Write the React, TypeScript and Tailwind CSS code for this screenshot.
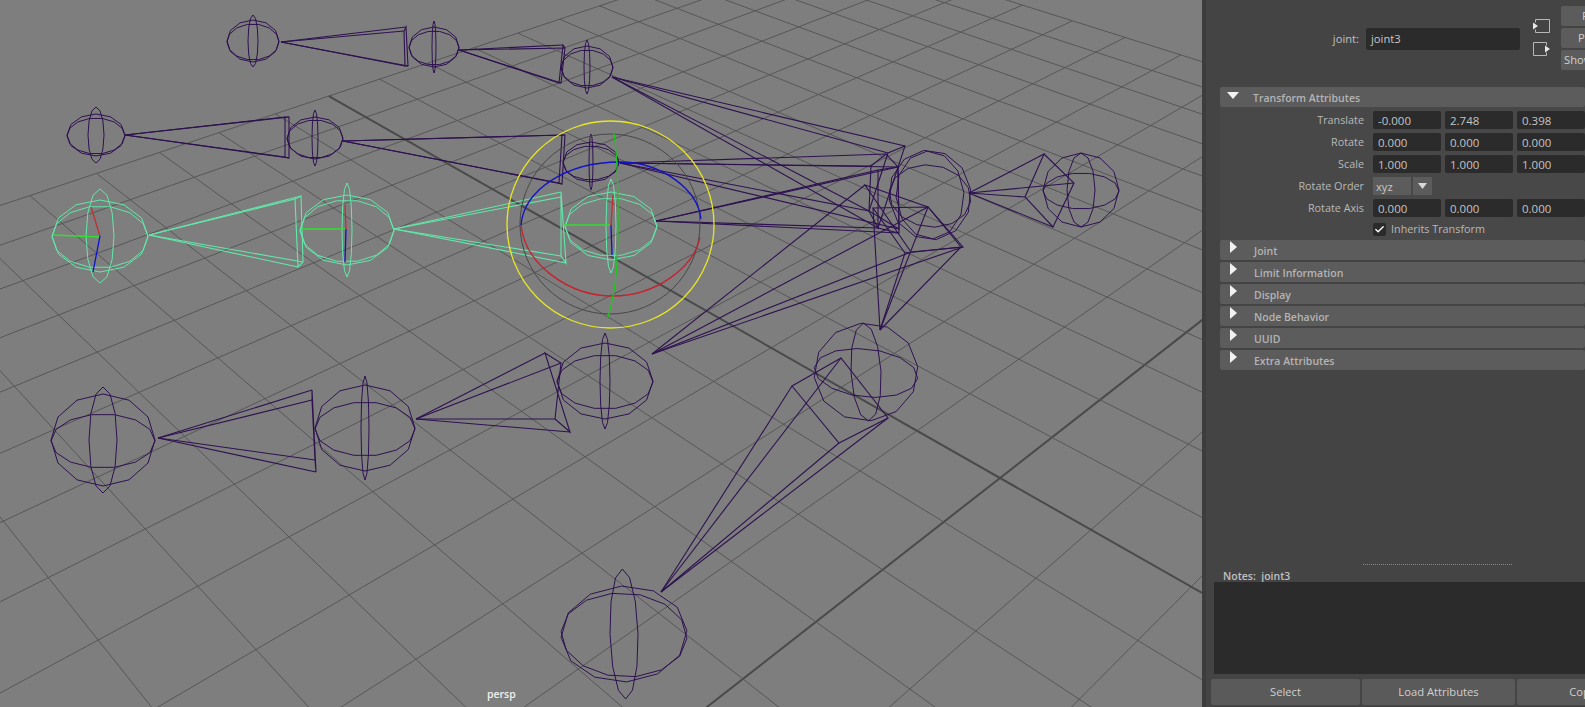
import { Check } from 'lucide-react';

type Pt = [number, number];

// perspective grid: maps grid cell (u, v) to the screen, origin at the axes crossing
const project = (u: number, v: number): Pt => {
  const w = 1 - 0.046 * u - 0.04 * v;
  return [1000 + (86.8 * u - 54 * v) / w, 478 + (49.4 * u + 42.2 * v) / w];
};

const steps = Array.from({ length: 25 }, (_, i) => i - 12);

function GridLine({ u, v }: { u?: number; v?: number }) {
  let a: Pt;
  let b: Pt;
  if (u !== undefined) {
    a = project(u, -12);
    b = project(u, Math.min(12, (0.95 - 0.046 * u) / 0.04));
  } else {
    a = project(-12, v as number);
    b = project(Math.min(12, (0.95 - 0.04 * (v as number)) / 0.046), v as number);
  }
  const axis = (u === 0 || v === 0);
  return (
    <line
      x1={a[0]}
      y1={a[1]}
      x2={b[0]}
      y2={b[1]}
      stroke={axis ? '#4a4a4a' : '#575757'}
      strokeWidth={axis ? 2 : 1}
    />
  );
}

const ring = (cx: number, cy: number, rx: number, ry: number, n = 16, tilt = 0) => {
  const t = (tilt * Math.PI) / 180;
  return Array.from({ length: n }, (_, i) => {
    const a = (i / n) * Math.PI * 2;
    const px = Math.cos(a) * rx;
    const py = Math.sin(a) * ry;
    return `${cx + px * Math.cos(t) - py * Math.sin(t)},${cy + px * Math.sin(t) + py * Math.cos(t)}`;
  }).join(' ');
};

type JointSpec = {
  x: number;
  y: number;
  rx: number;
  ry: number;
  hy: number;
  sx: number;
  sy: number;
  tilt?: number;
};

function Joint({ x, y, rx, ry, hy, sx, sy, tilt = 0, color }: JointSpec & { color: string }) {
  return (
    <g fill="none" stroke={color} strokeWidth={1}>
      <polygon points={ring(x, y, rx, ry, 12, tilt)} />
      <polygon points={ring(x, y + 1, rx, hy, 14, -tilt)} />
      <polygon points={ring(x, y, sx, sy, 12, tilt / 2)} />
    </g>
  );
}

function Bone({ tip, base, color }: { tip: Pt; base: Pt[]; color: string }) {
  return (
    <g fill="none" stroke={color} strokeWidth={1.1}>
      {base.map((p, i) => (
        <line key={i} x1={tip[0]} y1={tip[1]} x2={p[0]} y2={p[1]} />
      ))}
      <polygon points={base.map((p) => p.join(',')).join(' ')} />
    </g>
  );
}

const purple = '#2e1250';
const mint = '#62e8aa';

const joints: JointSpec[] = [
  { x: 253, y: 41, rx: 26, ry: 21, hy: 18, sx: 5, sy: 26 },
  { x: 434, y: 47, rx: 25, ry: 20, hy: 17, sx: 2, sy: 26 },
  { x: 587, y: 67, rx: 26, ry: 21, hy: 18, sx: 3, sy: 27 },
  { x: 96, y: 135, rx: 29, ry: 21, hy: 18, sx: 8, sy: 28 },
  { x: 315, y: 138, rx: 28, ry: 21, hy: 19, sx: 3, sy: 28 },
  { x: 591, y: 162, rx: 28, ry: 20, hy: 17, sx: 2, sy: 28 },
  { x: 103, y: 440, rx: 52, ry: 46, hy: 27, sx: 14, sy: 53 },
  { x: 365, y: 428, rx: 50, ry: 43, hy: 27, sx: 4, sy: 52 },
  { x: 605, y: 381, rx: 48, ry: 38, hy: 27, sx: 5, sy: 48 },
  { x: 930, y: 195, rx: 41, ry: 45, hy: 31, sx: 34, sy: 44, tilt: -8 },
  { x: 1081, y: 190, rx: 38, ry: 37, hy: 18, sx: 14, sy: 37 },
  { x: 866, y: 372, rx: 52, ry: 49, hy: 24, sx: 15, sy: 49, tilt: -6 },
  { x: 624, y: 634, rx: 63, ry: 48, hy: 42, sx: 14, sy: 65, tilt: -3 },
];

const bones: { tip: Pt; base: Pt[] }[] = [
  { tip: [281, 42], base: [[406, 27], [408, 66], [405, 66], [404, 31]] },
  { tip: [459, 50], base: [[563, 45], [559, 83], [561, 83], [565, 48]] },
  { tip: [612, 77], base: [[905, 146], [888, 153], [869, 211], [878, 228]] },
  { tip: [125, 135], base: [[289, 117], [289, 158], [285, 157], [285, 117]] },
  { tip: [343, 141], base: [[565, 135], [562, 184], [559, 183], [562, 135]] },
  { tip: [620, 163], base: [[886, 154], [871, 166], [869, 211], [899, 229], [898, 167]] },
  { tip: [158, 438], base: [[312, 390], [316, 472], [315, 460], [312, 400]] },
  { tip: [416, 419], base: [[545, 353], [570, 432], [555, 419], [561, 363]] },
  { tip: [656, 221], base: [[878, 170], [898, 167], [899, 233], [878, 228]] },
  { tip: [652, 354], base: [[865, 185], [928, 207], [963, 247], [911, 252]] },
  { tip: [880, 330], base: [[873, 208], [928, 207], [961, 247], [905, 253]] },
  { tip: [969, 193], base: [[1044, 154], [1074, 183], [1053, 227], [1025, 197]] },
  { tip: [661, 592], base: [[792, 386], [841, 358], [888, 418], [839, 443]] },
];

function Viewport() {
  return (
    <div className="relative h-full w-[1202px] shrink-0 overflow-hidden bg-[#7e7e7e]">
      <svg width="1202" height="707" viewBox="0 0 1202 707" className="block">
        {steps.map((n) => (
          <GridLine key={`u${n}`} u={n} />
        ))}
        {steps.map((n) => (
          <GridLine key={`v${n}`} v={n} />
        ))}

        {joints.map((j, i) => (
          <Joint key={i} {...j} color={purple} />
        ))}
        {bones.map((b, i) => (
          <Bone key={i} tip={b.tip} base={b.base} color={purple} />
        ))}

        {/* selected chain */}
        <Joint x={100} y={236} rx={48} ry={36} hy={31} sx={14} sy={47} color={mint} />
        <Joint x={347} y={230} rx={47} ry={35} hy={31} sx={5} sy={47} color={mint} />
        <Joint x={611} y={226} rx={46} ry={34} hy={29} sx={5} sy={47} color={mint} />
        <Bone tip={[149, 235]} base={[[301, 196], [303, 262], [298, 267], [295, 199]]} color={mint} />
        <Bone tip={[394, 229]} base={[[561, 192], [566, 263], [561, 256], [561, 197]]} color={mint} />

        {/* joint axes */}
        <g fill="none" strokeWidth={1.3}>
          <path d="M53 235L100 237M302 229L346 229M564 225L610 225" stroke="#30e030" />
          <path d="M91 207L100 236M345 205L346 229M613 195L611 225" stroke="#c03030" />
          <path d="M100 236L93 272M346 229L345 262M611 225L612 255" stroke="#1010d0" />
        </g>

        {/* rotate manipulator */}
        <g fill="none">
          <circle cx={610} cy={224} r={90} stroke="#484848" strokeWidth={1} />
          <path d="M521 225C524 190 566 162 620 162C662 162 698 190 701 219" stroke="#1212c8" strokeWidth={1.3} />
          <path d="M521 225C525 264 568 296 613 296C655 296 694 268 700 237" stroke="#c8202c" strokeWidth={1.3} />
          <path d="M614 133C618 160 618 190 618 215C618 250 617 280 613 295C612 303 610 311 608 317" stroke="#1cc81c" strokeWidth={1.3} />
          <circle cx={610.5} cy={224.5} r={103.5} stroke="#e6e628" strokeWidth={1.3} />
        </g>
      </svg>
      <span className="absolute left-[487px] top-[687px] text-[10.5px] font-semibold leading-[14px] text-[#f0f0f0]">
        persp
      </span>
    </div>
  );
}

const fieldClass =
  'flex h-[18px] w-[68px] shrink-0 items-center rounded-[2px] bg-[#2b2b2b] pl-[5px] pt-[1px] text-[11.5px] text-[#c4c4c4]';

function AttrRow({ label, values }: { label: string; values: string[] }) {
  return (
    <div className="mb-[4px] flex h-[18px] items-center">
      <span className="mr-[9px] w-[144px] shrink-0 text-right text-[10.8px] text-[#b8b8b8]">{label}</span>
      <div className="flex gap-[4px]">
        {values.map((v, i) => (
          <div key={i} className={fieldClass}>
            {v}
          </div>
        ))}
      </div>
    </div>
  );
}

function Section({ title, open }: { title: string; open?: boolean }) {
  return (
    <div className="mb-[2px] flex h-[20px] items-center rounded-[2px] bg-[#5c5c5c]">
      {open ? (
        <svg width="12" height="7" viewBox="0 0 12 7" className="ml-[7px] mb-[3px] shrink-0">
          <path d="M0 0H12L6 7Z" fill="#f2f2f2" />
        </svg>
      ) : (
        <svg width="7" height="12" viewBox="0 0 7 12" className="ml-[10px] mb-[6px] mr-[3px] shrink-0">
          <path d="M0 0L7 6L0 12Z" fill="#f2f2f2" />
        </svg>
      )}
      <span className="ml-[14px] pt-[2px] text-[10.5px] font-semibold text-[#b4b4b4]">{title}</span>
    </div>
  );
}

function SideIcon({ flip }: { flip?: boolean }) {
  return (
    <svg width="18" height="14" viewBox="0 0 18 14" className="shrink-0">
      {flip ? (
        <>
          <path d="M13.5 3.5V0.5H0.5V13.5H13.5V10.5" fill="none" stroke="#b8b8b8" />
          <path d="M12 3.5L17 7L12 10.5Z" fill="#e8e8e8" />
        </>
      ) : (
        <>
          <path d="M2.5 3.5V0.5H16.5V13.5H2.5V10.5" fill="none" stroke="#b8b8b8" />
          <path d="M0 3.5L5 7L0 10.5Z" fill="#e8e8e8" />
        </>
      )}
    </svg>
  );
}

function AttributePanel() {
  return (
    <div className="flex h-full w-[383px] shrink-0 flex-col overflow-hidden border-l-[4px] border-[#3d3d3d] bg-[#444444] text-[11.2px] leading-none">
      <div className="h-[87px] shrink-0 pl-[14px]">
        <div className="flex items-start pt-[6px]">
          <div className="mt-[21px] flex h-[22px] items-center pt-[1px]">
            <span className="w-[139px] text-right text-[#c0c0c0]">joint:</span>
            <div className="ml-[7px] flex h-[22px] w-[154px] items-center rounded-[2px] bg-[#2b2b2b] pl-[5px] text-[#c8c8c8]">
              joint3
            </div>
          </div>
          <div className="ml-[13px] mt-[13px] flex flex-col gap-[9px]">
            <SideIcon />
            <SideIcon flip />
          </div>
          <div className="ml-[10px] flex w-[90px] shrink-0 flex-col gap-[2px] text-[#d0d0d0]">
            <div className="flex h-[20px] items-center rounded-[2px] bg-[#5c5c5c] pl-[21px]">Focus</div>
            <div className="flex h-[20px] items-center rounded-[2px] bg-[#5c5c5c] pl-[17px]">Presets</div>
            <div className="flex h-[20px] items-center rounded-[2px] bg-[#5c5c5c] pl-[3px]">Show</div>
          </div>
        </div>
      </div>

      <div className="w-[379px] shrink-0 pl-[14px]">
        <Section title="Transform Attributes" open />
        <div className="-mt-[2px] h-[133px] bg-[#484848] pt-[4px]">
          <AttrRow label="Translate" values={['-0.000', '2.748', '0.398']} />
          <AttrRow label="Rotate" values={['0.000', '0.000', '0.000']} />
          <AttrRow label="Scale" values={['1.000', '1.000', '1.000']} />
          <div className="mb-[4px] flex h-[18px] items-center">
            <span className="mr-[9px] w-[144px] shrink-0 text-right text-[10.8px] text-[#b8b8b8]">Rotate Order</span>
            <div className="flex h-[18px] w-[38px] items-center bg-[#5c5c5c] pl-[3px] pt-[2px] text-[#c8c8c8]">xyz</div>
            <div className="ml-[2px] flex h-[18px] w-[19px] items-center justify-center bg-[#5c5c5c]">
              <svg width="9" height="6" viewBox="0 0 9 6">
                <path d="M0 0H9L4.5 6Z" fill="#d8d8d8" />
              </svg>
            </div>
          </div>
          <AttrRow label="Rotate Axis" values={['0.000', '0.000', '0.000']} />
          <div className="flex h-[16px] items-center pl-[153px]">
            <div className="flex h-[13px] w-[13px] items-center justify-center rounded-[2px] bg-[#2b2b2b]">
              <Check className="h-[11px] w-[11px] text-white" strokeWidth={3} />
            </div>
            <span className="ml-[5px] text-[10.8px] text-[#b8b8b8]">Inherits Transform</span>
          </div>
        </div>
        {['Joint', 'Limit Information', 'Display', 'Node Behavior', 'UUID', 'Extra Attributes'].map((t) => (
          <Section key={t} title={t} />
        ))}
      </div>

      <div className="flex flex-1 flex-col justify-end">
        <div className="ml-[157px] mb-[5px] w-[149px] border-t border-dotted border-[#8a8a8a]" />
        <div className="h-[12px] pl-[17px] text-[10.5px] font-semibold leading-[12px] text-[#c0c0c0]">
          Notes:&nbsp; joint3
        </div>
        <div className="ml-[8px] h-[92px] bg-[#2b2b2b]" />
        <div className="mb-[2px] ml-[5px] mt-[5px] flex h-[26px] gap-[2px] text-[#d0d0d0]">
          <div className="flex w-[149px] shrink-0 items-center justify-center rounded-[2px] bg-[#5a5a5a]">Select</div>
          <div className="flex w-[153px] shrink-0 items-center justify-center rounded-[2px] bg-[#5a5a5a]">
            Load Attributes
          </div>
          <div className="flex w-[153px] shrink-0 items-center justify-center rounded-[2px] bg-[#5a5a5a]">
            Copy Tab
          </div>
        </div>
      </div>
    </div>
  );
}

export default function App() {
  return (
    <div className="flex h-[707px] w-[1585px] overflow-hidden font-['Open_Sans',sans-serif]">
      <Viewport />
      <AttributePanel />
    </div>
  );
}
